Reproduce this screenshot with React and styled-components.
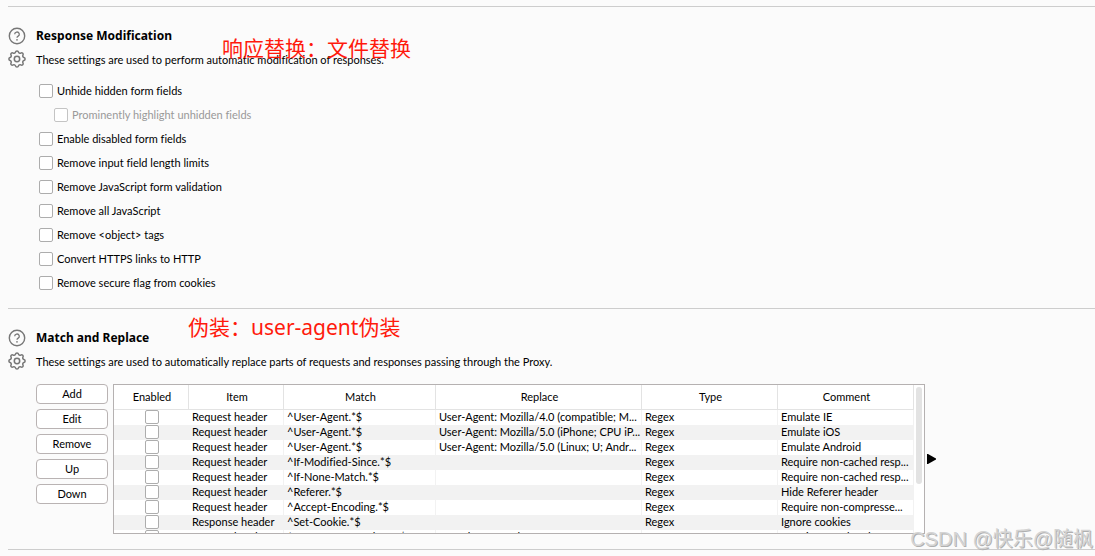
import React from "react";
import styled, { createGlobalStyle } from "styled-components";

const GlobalStyle = createGlobalStyle`
  * { box-sizing: border-box; }
  body {
    margin: 0;
    background: #fbfbfb;
    color: #000;
    font: 11px/15px Lato, "Noto Sans CJK SC", sans-serif;
    font-variant-ligatures: none;
  }
`;

const Page = styled.main`
  position: relative;
  padding: 6px 0 0 8px;
  overflow: hidden;
`;

const Section = styled.section`
  position: relative;
  border-top: 1px solid #cdcdcd;
  padding-top: 19px;
  padding-bottom: ${(p) => p.$bottom}px;
`;

const Heading = styled.header`
  display: grid;
  grid-template-columns: 18px 1fr;
  column-gap: 10px;
  row-gap: 4px;
  align-items: end;
`;

const IconButton = styled.button`
  display: flex;
  width: 18px;
  height: 18px;
  padding: 0;
  border: 0;
  background: none;
  color: #777;
  align-self: ${(p) => p.$align || "center"};
`;

const Title = styled.h2`
  margin: 0;
  font-family: "Noto Sans", sans-serif;
  font-size: 12px;
  line-height: 20px;
  font-weight: 700;
`;

const Description = styled.p`
  margin: 0;
  line-height: 20px;
`;

const Note = styled.span`
  position: absolute;
  left: ${(p) => p.$left}px;
  top: ${(p) => p.$top}px;
  font: 21px/28px "Noto Sans", "Noto Sans CJK SC", sans-serif;
  color: #ff1a0d;
  white-space: nowrap;
  pointer-events: none;
`;

const Options = styled.div`
  display: flex;
  flex-direction: column;
  padding: 9px 0 0 31px;
`;

const Option = styled.label`
  display: flex;
  align-items: center;
  gap: 4px;
  height: 24px;
  margin-left: ${(p) => (p.$nested ? 15 : 0)}px;
  color: ${(p) => (p.$nested ? "#999" : "inherit")};
`;

const OptionText = styled.span`
  padding-bottom: 2px;
`;

const Checkbox = styled.input.attrs({ type: "checkbox" })`
  appearance: none;
  flex: none;
  width: 14px;
  height: 14px;
  margin: 0;
  border: 1px solid ${(p) => (p.disabled ? "#c4c4c4" : "#adadad")};
  border-radius: 2px;
  background: #fff;

  &:checked {
    background: #777;
  }
`;

const Editor = styled.div`
  display: flex;
  align-items: flex-start;
  padding: 12px 16px 0 28px;
`;

const Actions = styled.div`
  display: flex;
  flex-direction: column;
  gap: 5px;
  flex: none;
  width: 72px;
  margin-right: 5px;
`;

const ActionButton = styled.button`
  height: 20px;
  padding: 0 0 2px;
  border: 1px solid #b9b3b3;
  border-radius: 4px;
  background: #fff;
  color: inherit;
  font: inherit;
`;

const TableFrame = styled.div`
  display: flex;
  flex: 0 1 812px;
  min-width: 0;
  height: 150px;
  overflow: hidden;
  border: 1px solid #b5b1b1;
  background: #fff;
`;

const Rules = styled.table`
  flex: 1;
  min-width: 0;
  width: 100%;
  height: max-content;
  table-layout: fixed;
  border-collapse: separate;
  border-spacing: 0;
`;

const HeadCell = styled.th`
  height: 25px;
  padding: 0 0 2px 2px;
  border-right: 1px solid #e3e3e3;
  border-bottom: 1px solid #e3e3e3;
  font-weight: 400;
`;

const Row = styled.tr`
  background: ${(p) => (p.$striped ? "#f2f2f2" : "#fff")};
`;

const Cell = styled.td`
  height: 15px;
  padding: 0 0 0 3px;
  overflow: hidden;
  border-right: 1px solid ${(p) => (p.$striped ? "transparent" : "#f2f2f2")};
  line-height: 13px;
  vertical-align: top;
  white-space: nowrap;
  text-overflow: ellipsis;
`;

const CheckCell = styled.td`
  height: 15px;
  padding: 0;
`;

const CheckHolder = styled.div`
  display: flex;
  justify-content: center;
  height: 15px;
`;

const Track = styled.div`
  flex: none;
  width: 10px;
  padding: 2px;
`;

const Thumb = styled.div`
  width: 6px;
  height: 97px;
  border-radius: 3px;
  background: #e3e3e3;
`;

const Expander = styled.button`
  display: flex;
  flex: none;
  align-self: center;
  margin-left: 2px;
  padding: 0;
  border: 0;
  background: none;
`;

const Watermark = styled.span`
  position: absolute;
  right: 2px;
  bottom: 4px;
  font: 20px/26px "Liberation Sans", "Noto Sans CJK SC", sans-serif;
  color: #d4d4d4;
  text-shadow: 1px 1px 0 #b0b0b0;
  white-space: nowrap;
  pointer-events: none;
`;

const Footer = styled.footer`
  height: 7px;
  border-top: 1px solid #cdcdcd;
`;

function HelpIcon() {
  return (
    <svg width="18" height="18" viewBox="0 0 18 18" fill="none" stroke="currentColor" aria-hidden="true">
      <circle cx="9" cy="9" r="7.7" strokeWidth="1.4" />
      <path d="M6.7 7.3a2.3 2.2 0 1 1 3.5 1.8c-.8.5-1.2.8-1.2 1.6" strokeWidth="1.3" />
      <circle cx="9" cy="12.8" r=".85" fill="currentColor" stroke="none" />
    </svg>
  );
}

function GearIcon() {
  return (
    <svg width="18" height="18" viewBox="2 2 20 20" fill="none" stroke="currentColor" strokeWidth="1.7" aria-hidden="true">
      <path d="M10.325 4.317c.426-1.756 2.924-1.756 3.35 0a1.724 1.724 0 0 0 2.573 1.066c1.543-.94 3.31.826 2.37 2.37a1.724 1.724 0 0 0 1.065 2.572c1.756.426 1.756 2.924 0 3.35a1.724 1.724 0 0 0-1.066 2.573c.94 1.543-.826 3.31-2.37 2.37a1.724 1.724 0 0 0-2.572 1.065c-.426 1.756-2.924 1.756-3.35 0a1.724 1.724 0 0 0-2.573-1.066c-1.543.94-3.31-.826-2.37-2.37a1.724 1.724 0 0 0-1.065-2.572c-1.756-.426-1.756-2.924 0-3.35a1.724 1.724 0 0 0 1.066-2.573c-.94-1.543.826-3.31 2.37-2.37 1 .608 2.296.07 2.572-1.065z" />
      <circle cx="12" cy="12" r="3" />
    </svg>
  );
}

function SectionHeading({ title, children }) {
  return (
    <Heading>
      <IconButton type="button" aria-label={`Help: ${title}`}><HelpIcon /></IconButton>
      <Title>{title}</Title>
      <IconButton type="button" $align="start" aria-label={`Options: ${title}`}><GearIcon /></IconButton>
      <Description>{children}</Description>
    </Heading>
  );
}

const options = [
  { label: "Unhide hidden form fields" },
  { label: "Prominently highlight unhidden fields", nested: true },
  { label: "Enable disabled form fields" },
  { label: "Remove input field length limits" },
  { label: "Remove JavaScript form validation" },
  { label: "Remove all JavaScript" },
  { label: "Remove <object> tags" },
  { label: "Convert HTTPS links to HTTP" },
  { label: "Remove secure flag from cookies" },
];

const columns = [
  { name: "Enabled", width: 75 },
  { name: "Item", width: 95 },
  { name: "Match", width: 152 },
  { name: "Replace", width: 206 },
  { name: "Type", width: 136 },
  { name: "Comment" },
];

const rules = [
  ["Request header", "^User-Agent.*$", "User-Agent: Mozilla/4.0 (compatible; M...", "Regex", "Emulate IE"],
  ["Request header", "^User-Agent.*$", "User-Agent: Mozilla/5.0 (iPhone; CPU iP...", "Regex", "Emulate iOS"],
  ["Request header", "^User-Agent.*$", "User-Agent: Mozilla/5.0 (Linux; U; Andr...", "Regex", "Emulate Android"],
  ["Request header", "^If-Modified-Since.*$", "", "Regex", "Require non-cached resp..."],
  ["Request header", "^If-None-Match.*$", "", "Regex", "Require non-cached resp..."],
  ["Request header", "^Referer.*$", "", "Regex", "Hide Referer header"],
  ["Request header", "^Accept-Encoding.*$", "", "Regex", "Require non-compresse..."],
  ["Response header", "^Set-Cookie.*$", "", "Regex", "Ignore cookies"],
  ["Request header", "^Host: foo.example.org$", "Host: bar.example.org", "Regex", "Rewrite Host header"],
];

export default function App() {
  return (
    <>
      <GlobalStyle />
      <Page>
        <Section $bottom={13}>
          <SectionHeading title="Response Modification">
            These settings are used to perform automatic modification of responses.
          </SectionHeading>
          <Note $left={214} $top={27}>响应替换：文件替换</Note>
          <Options>
            {options.map((o) => (
              <Option key={o.label} $nested={o.nested}>
                <Checkbox disabled={o.nested} />
                <OptionText>{o.label}</OptionText>
              </Option>
            ))}
          </Options>
        </Section>

        <Section $bottom={15}>
          <SectionHeading title="Match and Replace">
            These settings are used to automatically replace parts of requests and responses passing through the Proxy.
          </SectionHeading>
          <Note $left={180} $top={4}>伪装：user-agent伪装</Note>
          <Editor>
            <Actions>
              {["Add", "Edit", "Remove", "Up", "Down"].map((name) => (
                <ActionButton key={name} type="button">{name}</ActionButton>
              ))}
            </Actions>
            <TableFrame>
              <Rules>
                <colgroup>
                  {columns.map((c) => <col key={c.name} width={c.width} />)}
                </colgroup>
                <thead>
                  <tr>
                    {columns.map((c) => <HeadCell key={c.name} scope="col">{c.name}</HeadCell>)}
                  </tr>
                </thead>
                <tbody>
                  {rules.map((cells, i) => (
                    <Row key={i} $striped={i % 2 === 1}>
                      <CheckCell>
                        <CheckHolder>
                          <Checkbox aria-label={`Enable rule ${i + 1}`} />
                        </CheckHolder>
                      </CheckCell>
                      {cells.map((text, j) => (
                        <Cell key={j} $striped={i % 2 === 1}>{text}</Cell>
                      ))}
                    </Row>
                  ))}
                </tbody>
              </Rules>
              <Track><Thumb /></Track>
            </TableFrame>
            <Expander type="button" aria-label="Expand">
              <svg width="9" height="10" viewBox="0 0 9 10" aria-hidden="true">
                <path d="M0 0h1l8 4.500v1L1 10H0z" fill="#000" />
              </svg>
            </Expander>
          </Editor>
        </Section>
        <Footer />
        <Watermark>CSDN @快乐@随枫</Watermark>
      </Page>
    </>
  );
}
